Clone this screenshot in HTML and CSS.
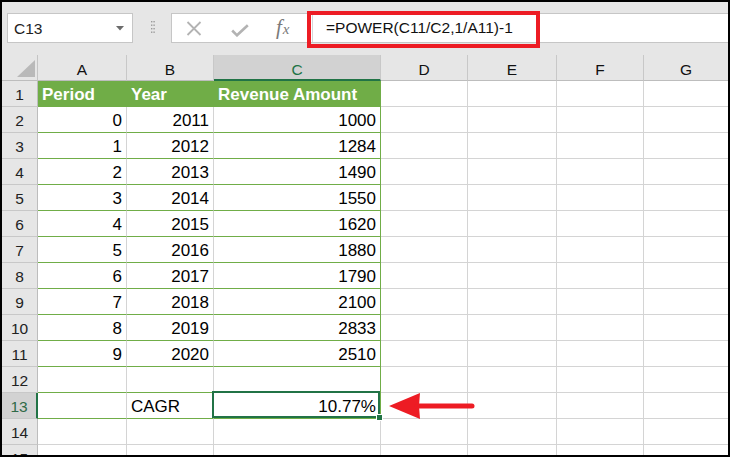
FILE: index.html
```html
<!DOCTYPE html>
<html>
<head>
<meta charset="utf-8">
<link rel="stylesheet" href="styles.css">
</head>
<body>
<div class="frame">
  <div class="fbar">
    <div class="namebox">
      <span class="ref">C13</span>
      <svg class="caret" width="8" height="5" viewBox="0 0 8 5"><polygon points="0,0 8,0 4,4.5" fill="#6b6b6b"/></svg>
    </div>
    <svg class="grip" width="4" height="13" viewBox="0 0 4 13">
      <rect x="0" y="0" width="1.4" height="1.4" fill="#9a9a9a"/><rect x="2.4" y="0" width="1.4" height="1.4" fill="#9a9a9a"/>
      <rect x="0" y="3.5" width="1.4" height="1.4" fill="#9a9a9a"/><rect x="2.4" y="3.5" width="1.4" height="1.4" fill="#9a9a9a"/>
      <rect x="0" y="7" width="1.4" height="1.4" fill="#9a9a9a"/><rect x="2.4" y="7" width="1.4" height="1.4" fill="#9a9a9a"/>
      <rect x="0" y="10.5" width="1.4" height="1.4" fill="#9a9a9a"/><rect x="2.4" y="10.5" width="1.4" height="1.4" fill="#9a9a9a"/>
    </svg>
    <div class="fbox">
      <svg class="ico-x" width="16" height="15" viewBox="0 0 16 15"><path d="M1.5 1 L14.5 14 M14.5 1 L1.5 14" stroke="#b3b3b3" stroke-width="1.8" fill="none"/></svg>
      <svg class="ico-ok" width="18" height="13" viewBox="0 0 18 13"><polyline points="1.2,6.5 6,11.3 16.8,1.2" stroke="#b3b3b3" stroke-width="2.6" fill="none"/></svg>
      <span class="fx"><span class="fx-f">f</span><span class="fx-x">x</span></span>
      <div class="fentry">=POWER(C11/C2,1/A11)-1</div>
      <div class="redbox"></div>
    </div>
  </div>

  <div class="sheet">
    <div class="corner"><svg width="18" height="17" viewBox="0 0 18 17"><polygon points="18,0 18,17 0,17" fill="#b9b9b9"/></svg></div>
    <div class="h">A</div><div class="h">B</div><div class="h sel-h">C</div><div class="h">D</div><div class="h">E</div><div class="h">F</div><div class="h last">G</div>

    <div class="rh">1</div><div class="c gh">Period</div><div class="c gh">Year</div><div class="c gh">Revenue Amount</div><div class="c"></div><div class="c"></div><div class="c"></div><div class="c last"></div>

    <div class="rh">2</div><div class="c g r">0</div><div class="c g r">2011</div><div class="c g gr r">1000</div><div class="c"></div><div class="c"></div><div class="c"></div><div class="c last"></div>
    <div class="rh">3</div><div class="c g r">1</div><div class="c g r">2012</div><div class="c g gr r">1284</div><div class="c"></div><div class="c"></div><div class="c"></div><div class="c last"></div>
    <div class="rh">4</div><div class="c g r">2</div><div class="c g r">2013</div><div class="c g gr r">1490</div><div class="c"></div><div class="c"></div><div class="c"></div><div class="c last"></div>
    <div class="rh">5</div><div class="c g r">3</div><div class="c g r">2014</div><div class="c g gr r">1550</div><div class="c"></div><div class="c"></div><div class="c"></div><div class="c last"></div>
    <div class="rh">6</div><div class="c g r">4</div><div class="c g r">2015</div><div class="c g gr r">1620</div><div class="c"></div><div class="c"></div><div class="c"></div><div class="c last"></div>
    <div class="rh">7</div><div class="c g r">5</div><div class="c g r">2016</div><div class="c g gr r">1880</div><div class="c"></div><div class="c"></div><div class="c"></div><div class="c last"></div>
    <div class="rh">8</div><div class="c g r">6</div><div class="c g r">2017</div><div class="c g gr r">1790</div><div class="c"></div><div class="c"></div><div class="c"></div><div class="c last"></div>
    <div class="rh">9</div><div class="c g r">7</div><div class="c g r">2018</div><div class="c g gr r">2100</div><div class="c"></div><div class="c"></div><div class="c"></div><div class="c last"></div>
    <div class="rh">10</div><div class="c g r">8</div><div class="c g r">2019</div><div class="c g gr r">2833</div><div class="c"></div><div class="c"></div><div class="c"></div><div class="c last"></div>
    <div class="rh">11</div><div class="c g r">9</div><div class="c g r">2020</div><div class="c g gr r">2510</div><div class="c"></div><div class="c"></div><div class="c"></div><div class="c last"></div>
    <div class="rh">12</div><div class="c g"></div><div class="c g"></div><div class="c g gr"></div><div class="c"></div><div class="c"></div><div class="c"></div><div class="c last"></div>
    <div class="rh sel-rh">13</div><div class="c g"></div><div class="c g">CAGR</div><div class="c g gr r sel">10.77%</div><div class="c"></div><div class="c"></div><div class="c"></div><div class="c last"></div>
    <div class="rh">14</div><div class="c"></div><div class="c"></div><div class="c"></div><div class="c"></div><div class="c"></div><div class="c"></div><div class="c last"></div>
    <div class="rh">15</div><div class="c"></div><div class="c"></div><div class="c"></div><div class="c"></div><div class="c"></div><div class="c"></div><div class="c last"></div>

    <svg class="arrow" width="90" height="30" viewBox="0 0 90 30">
      <polygon points="2,15 33,2 32,15 33,28" fill="#ed1c24"/>
      <line x1="30" y1="15" x2="85" y2="15" stroke="#ed1c24" stroke-width="5" stroke-linecap="round"/>
    </svg>
  </div>
</div>
</body>
</html>
```

FILE: styles.css
```css
html, body {
  margin: 0;
  padding: 0;
}
body {
  font-family: "Liberation Sans", Arial, sans-serif;
  color: #000;
}
.frame {
  width: 730px;
  height: 457px;
  box-sizing: border-box;
  border: 2px solid #000;
  background: #e6e6e6;
  overflow: hidden;
}

/* formula bar */
.fbar {
  height: 53px;
  box-sizing: border-box;
  padding-top: 11px;
  display: flex;
  align-items: flex-start;
}
.namebox {
  margin-left: 5px;
  width: 126px;
  height: 30px;
  box-sizing: border-box;
  border: 1px solid #c6c6c6;
  background: #fff;
  display: flex;
  align-items: center;
  justify-content: space-between;
  padding: 0 8px 0 6px;
}
.ref {
  font-size: 15.5px;
  color: #222;
  line-height: 18px;
  padding-top: 1px;
}
.caret {
  display: block;
  margin-top: 1px;
}
.grip {
  display: block;
  margin-left: 18px;
  margin-top: 8px;
}
.fbox {
  position: relative;
  flex: 1;
  margin-left: 16px;
  height: 30px;
  box-sizing: border-box;
  border: 1px solid #c6c6c6;
  border-right: none;
  background: #fff;
  display: flex;
  align-items: center;
}
.ico-x {
  display: block;
  margin-left: 14px;
}
.ico-ok {
  display: block;
  margin-left: 29px;
  margin-top: 4px;
}
.fx {
  margin-left: 27px;
  width: 17px;
  font-family: "Liberation Serif", "Times New Roman", serif;
  font-style: italic;
  color: #7a7a7a;
  line-height: 20px;
  white-space: nowrap;
}
.fx-f {
  font-size: 21px;
}
.fx-x {
  font-size: 15px;
  margin-left: 1px;
}
.fentry {
  margin-left: 19px;
  align-self: stretch;
  border-left: 1px solid #d6d6d6;
  padding-left: 13px;
  font-size: 15.5px;
  line-height: 28px;
  color: #111;
  white-space: nowrap;
}
.redbox {
  position: absolute;
  left: 135px;
  top: -3px;
  width: 233px;
  height: 37px;
  box-sizing: border-box;
  border: 4px solid #ed1c24;
}

/* sheet */
.sheet {
  position: relative;
  display: grid;
  grid-template-columns: 36px 89px 87px 167px 87px 89px 87px 1fr;
  grid-auto-rows: 26px;
  background: #fff;
}
.corner {
  background: #e6e6e6;
  border-right: 1px solid #c4c4c4;
  border-bottom: 1px solid #bdbdbd;
  box-sizing: border-box;
  display: flex;
  justify-content: flex-end;
  align-items: flex-end;
  padding: 0 2px 3px 0;
}
.corner svg {
  display: block;
}
.h {
  background: #e6e6e6;
  border-right: 1px solid #c8c8c8;
  border-bottom: 1px solid #bdbdbd;
  box-sizing: border-box;
  text-align: center;
  font-size: 15.5px;
  padding-top: 4px;
  line-height: 21px;
  color: #111;
}
.sel-h {
  background: #d2d2d2;
  color: #217346;
  border-bottom: 2px solid #217346;
}
.rh {
  background: #e6e6e6;
  border-right: 1px solid #bdbdbd;
  border-bottom: 1px solid #c8c8c8;
  box-sizing: border-box;
  text-align: center;
  font-size: 15.5px;
  padding-top: 3px;
  line-height: 22px;
  color: #222;
}
.sel-rh {
  background: #d2d2d2;
  color: #2f6a48;
  border-right: 2px solid #217346;
}
.c {
  border-right: 1px solid #d4d4d4;
  border-bottom: 1px solid #d4d4d4;
  box-sizing: border-box;
  font-size: 17px;
  padding: 3px 4px 0 4px;
  line-height: 22px;
  white-space: nowrap;
}
.last {
  border-right: none;
}
.r {
  text-align: right;
}
.g {
  border-bottom-color: #70ad47;
}
.gr {
  border-right-color: #70ad47;
}
.gh {
  background: #70ad47;
  color: #fff;
  font-weight: bold;
  border-right-color: #70ad47;
  border-bottom-color: #70ad47;
}
.sel {
  position: relative;
  z-index: 2;
}
.sel::after {
  content: "";
  position: absolute;
  left: -2px;
  top: -2px;
  right: 0;
  bottom: 0;
  border: 2px solid #217346;
}
.sel::before {
  content: "";
  position: absolute;
  right: -3px;
  bottom: -3px;
  width: 5px;
  height: 5px;
  background: #217346;
  border: 1px solid #fff;
  z-index: 3;
}
.arrow {
  position: absolute;
  left: 385px;
  top: 336px;
  display: block;
}
```
